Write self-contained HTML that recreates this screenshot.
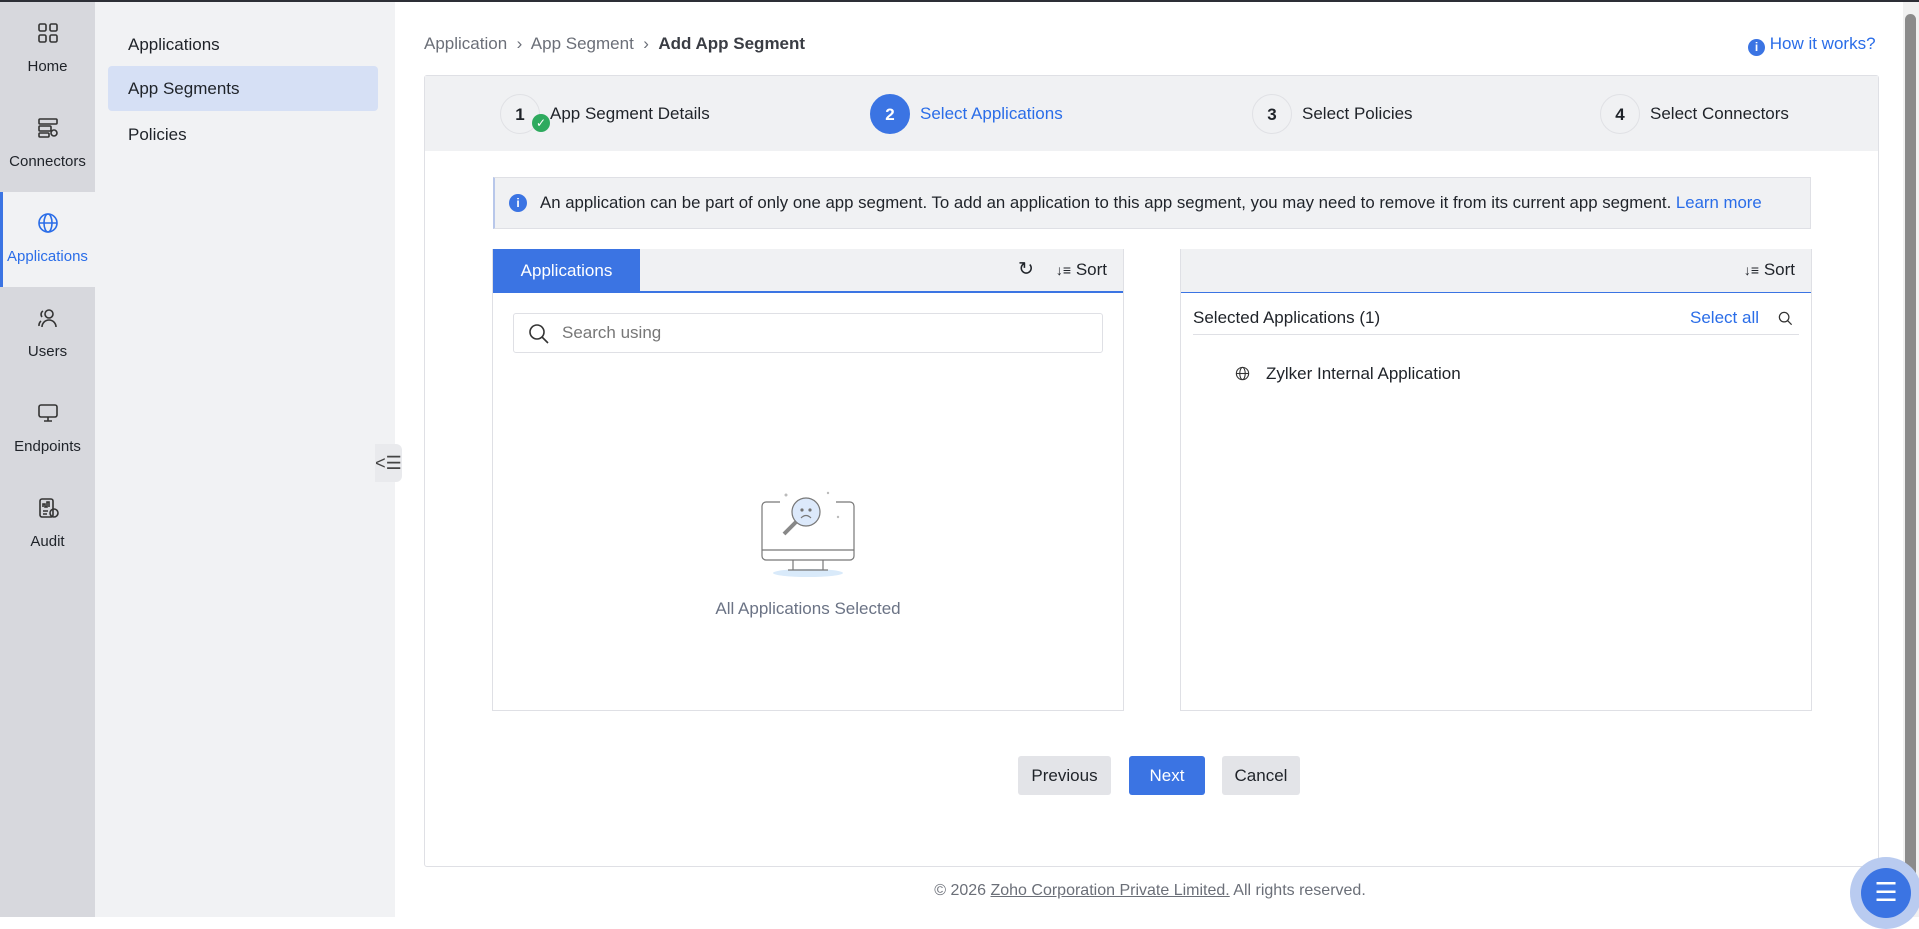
<!DOCTYPE html>
<html><head><meta charset="utf-8"><style>
*{box-sizing:border-box;margin:0;padding:0}
body{width:1919px;height:917px;overflow:hidden;font-family:"Liberation Sans",sans-serif;background:#fff;position:relative;color:#1f2329}
.abs{position:absolute}
.topline{left:0;top:0;width:1919px;height:2px;background:#2d2f36}
.rail{left:0;top:2px;width:95px;height:915px;background:#d7d8dd}
.ri{position:absolute;left:0;width:95px;height:95px;text-align:center;font-size:15px;color:#1f2329}
.ri svg{display:block;margin:20px auto 14px}
.ri.act{background:#f1f2f4;color:#2a6de8}
.ri.act:before{content:"";position:absolute;left:0;top:0;width:3px;height:95px;background:#3b74e3}
.sub{left:95px;top:2px;width:300px;height:915px;background:#f1f2f4}
.si{position:absolute;left:13px;width:270px;height:45px;line-height:45px;padding-left:20px;font-size:17px;border-radius:4px}
.card{left:424px;top:75px;width:1455px;height:792px;border:1px solid #dfe0e5;border-radius:3px;background:#fff}
.steps{left:0;top:0;width:100%;height:75px;background:#f0f1f3}
.st{position:absolute;top:18px;height:40px;line-height:40px;font-size:17px}
.num{display:inline-block;width:40px;height:40px;border-radius:50%;border:1px solid #e0e1e5;text-align:center;font-weight:bold;margin-right:10px;vertical-align:top}
.btn{position:absolute;top:755px;height:39px;line-height:39px;text-align:center;font-size:17px;border-radius:3px}
</style></head><body>
<div class="abs topline"></div>
<div class="abs rail">
 <div class="ri" style="top:0"><svg width="22" height="22" viewBox="0 0 22 22" fill="none" stroke="#333" stroke-width="1.6"><rect x="2" y="2" width="7" height="7" rx="1.5"/><rect x="13" y="2" width="7" height="7" rx="1.5"/><rect x="2" y="13" width="7" height="7" rx="1.5"/><rect x="13" y="13" width="7" height="7" rx="1.5"/></svg>Home</div>
 <div class="ri" style="top:95px"><svg width="22" height="22" viewBox="0 0 22 22" fill="none" stroke="#333" stroke-width="1.6"><rect x="2" y="2" width="18" height="5" rx="1"/><rect x="2" y="9" width="12" height="5" rx="1"/><rect x="2" y="16" width="10" height="4" rx="1"/><circle cx="17" cy="16" r="3"/></svg>Connectors</div>
 <div class="ri act" style="top:190px"><svg width="22" height="22" viewBox="0 0 22 22" fill="none" stroke="#2a6de8" stroke-width="1.6"><circle cx="11" cy="11" r="9"/><ellipse cx="11" cy="11" rx="4" ry="9"/><path d="M2 11h18"/></svg>Applications</div>
 <div class="ri" style="top:285px"><svg width="22" height="22" viewBox="0 0 22 22" fill="none" stroke="#333" stroke-width="1.6"><circle cx="12" cy="7" r="4"/><path d="M5 20a7 7 0 0 1 14 0M6 4a4 4 0 0 0-1 6M2 19a6 6 0 0 1 2-5"/></svg>Users</div>
 <div class="ri" style="top:380px"><svg width="22" height="22" viewBox="0 0 22 22" fill="none" stroke="#333" stroke-width="1.6"><rect x="2" y="3" width="18" height="12" rx="2"/><path d="M11 15v4M7 19h8"/></svg>Endpoints</div>
 <div class="ri" style="top:475px"><svg width="22" height="22" viewBox="0 0 22 22" fill="none" stroke="#333" stroke-width="1.6"><rect x="3" y="2" width="13" height="18" rx="2"/><path d="M6 14h5M6 17h4M6 10V7h2v3h2V5h2v5"/><circle cx="17" cy="16" r="4"/></svg>Audit</div>
</div>
<div class="abs sub">
 <div class="si" style="top:20px">Applications</div>
 <div class="si" style="top:64px;background:#d6e0f5">App Segments</div>
 <div class="si" style="top:110px">Policies</div>
 <div style="position:absolute;left:280px;top:442px;width:27px;height:38px;background:#e9eaed;border-radius:0 6px 6px 0;font-size:18px;line-height:38px;text-align:center;color:#444">&lt;☰</div>
</div>
<div class="abs" style="left:424px;top:34px;font-size:17px;color:#6b6f78">Application &nbsp;›&nbsp; App Segment &nbsp;›&nbsp; <b style="color:#3a3d44;font-weight:bold">Add App Segment</b></div>
<div class="abs" style="left:1748px;top:34px;font-size:17px;color:#2a6de8"><span style="display:inline-block;width:17px;height:17px;border-radius:50%;background:#3b74e3;color:#fff;font-size:12px;text-align:center;line-height:17px;font-weight:bold;vertical-align:-2px">i</span> How it works?</div>
<div class="abs card">
 <div class="abs steps">
  <div class="st" style="left:75px"><span class="num">1</span>App Segment Details<span style="position:absolute;left:32px;top:20px;width:18px;height:18px;border-radius:50%;background:#2eaa5e;color:#fff;font-size:12px;line-height:18px;text-align:center">✓</span></div>
  <div class="st" style="left:445px;color:#2a6de8"><span class="num" style="background:#3b74e3;color:#fff;border-color:#3b74e3">2</span>Select Applications</div>
  <div class="st" style="left:827px"><span class="num">3</span>Select Policies</div>
  <div class="st" style="left:1175px"><span class="num">4</span>Select Connectors</div>
 </div>
 <div class="abs" style="left:68px;top:101px;width:1318px;height:52px;background:#f0f1f3;border:1px solid #dfe0e5;border-left:2px solid #b8c7ea;font-size:16.8px;line-height:50px;padding-left:45px">
  <span style="position:absolute;left:14px;top:16px;width:18px;height:18px;border-radius:50%;background:#3b74e3;color:#fff;font-size:12px;line-height:18px;text-align:center;font-weight:bold">i</span>
  An application can be part of only one app segment. To add an application to this app segment, you may need to remove it from its current app segment. <span style="color:#2a6de8">Learn more</span></div>
 <!-- left panel -->
 <div class="abs" style="left:67px;top:173px;width:632px;height:462px;border:1px solid #dfe0e5;border-top:none">
  <div style="height:44px;background:#f0f1f3;border-bottom:2px solid #3b74e3;position:relative">
   <div style="position:absolute;left:0;top:0;width:147px;height:44px;background:#3b74e3;color:#fff;font-size:17px;line-height:44px;text-align:center">Applications</div>
   <div style="position:absolute;right:16px;top:0;line-height:42px;font-size:17px"><span style="font-size:19px;margin-right:22px">↻</span><span style="font-size:14px">↓≡</span> Sort</div>
  </div>
  <div style="position:absolute;left:20px;top:64px;width:590px;height:40px;border:1px solid #dfe0e5;border-radius:3px;font-size:17px;color:#777;line-height:38px;padding-left:48px">
   <svg style="position:absolute;left:14px;top:9px" width="22" height="22" viewBox="0 0 22 22" fill="none" stroke="#333" stroke-width="1.6"><circle cx="9" cy="9" r="7"/><path d="M14 14l6 6"/></svg>Search using</div>
  <svg style="position:absolute;left:265px;top:238px" width="100" height="90" viewBox="0 0 100 90" fill="none" stroke="#777" stroke-width="1.2">
   <ellipse cx="50" cy="86" rx="35" ry="4" fill="#d9eafa" stroke="none"/>
   <path d="M22 15H8a4 4 0 0 0-4 4v50a4 4 0 0 0 4 4h84a4 4 0 0 0 4-4V19a4 4 0 0 0-4-4H78"/><path d="M4 63h92M35 73v10M65 73v10M30 83h40"/>
   <circle cx="48" cy="25" r="14" fill="#dce9fb"/><path d="M38 35L26 47" stroke-width="4" stroke="#888"/>
   <circle cx="44" cy="23" r="1" fill="#555"/><circle cx="52" cy="23" r="1" fill="#555"/><path d="M43 31q5-5 10 0"/>
   <circle cx="28" cy="8" r="1.5" fill="#bbb" stroke="none"/><circle cx="70" cy="6" r="1.2" fill="#bbb" stroke="none"/><circle cx="80" cy="30" r="1.2" fill="#bbb" stroke="none"/>
  </svg>
  <div style="position:absolute;left:0;width:630px;top:350px;text-align:center;font-size:17px;color:#6b7385">All Applications Selected</div>
 </div>
 <!-- right panel -->
 <div class="abs" style="left:755px;top:173px;width:632px;height:462px;border:1px solid #dfe0e5;border-top:none">
  <div style="height:44px;background:#f0f1f3;border-bottom:1px solid #3b74e3;position:relative">
   <div style="position:absolute;right:16px;top:0;line-height:42px;font-size:17px"><span style="font-size:14px">↓≡</span> Sort</div>
  </div>
  <div style="position:absolute;left:12px;top:52px;width:606px;height:34px;border-bottom:1px solid #dfe0e5;font-size:17px;line-height:34px">Selected Applications (1)
   <span style="position:absolute;right:40px;color:#2a6de8">Select all</span>
   <svg style="position:absolute;right:6px;top:10px" width="15" height="15" viewBox="0 0 22 22" fill="none" stroke="#333" stroke-width="1.8"><circle cx="9" cy="9" r="7"/><path d="M14 14l6 6"/></svg></div>
  <div style="position:absolute;left:54px;top:115px;font-size:17px"><svg style="position:absolute;left:0;top:2px" width="15" height="15" viewBox="0 0 22 22" fill="none" stroke="#333" stroke-width="1.6"><circle cx="11" cy="11" r="9"/><ellipse cx="11" cy="11" rx="4" ry="9"/><path d="M2 11h18"/></svg><span style="margin-left:31px">Zylker Internal Application</span></div>
 </div>
 <div class="btn" style="left:593px;top:680px;width:93px;background:#e3e4e8">Previous</div>
 <div class="btn" style="left:704px;top:680px;width:76px;background:#3b74e3;color:#fff">Next</div>
 <div class="btn" style="left:797px;top:680px;width:78px;background:#e3e4e8">Cancel</div>
</div>
<div class="abs" style="left:395px;width:1510px;top:882px;text-align:center;font-size:16px;color:#6b6f78">© 2026 <u>Zoho Corporation Private Limited.</u> All rights reserved.</div>
<div class="abs" style="left:1903px;top:2px;width:16px;height:915px;background:#f1f1f1"></div>
<div class="abs" style="left:1905px;top:14px;width:11px;height:888px;background:#8b8b8b;border-radius:6px"></div>
<div class="abs" style="left:1850px;top:857px;width:72px;height:72px;border-radius:50%;background:#b9cbf0"></div>
<div class="abs" style="left:1861px;top:868px;width:50px;height:50px;border-radius:50%;background:#3b74e3;color:#fff;font-size:26px;line-height:48px;text-align:center">☰</div>
</body></html>
